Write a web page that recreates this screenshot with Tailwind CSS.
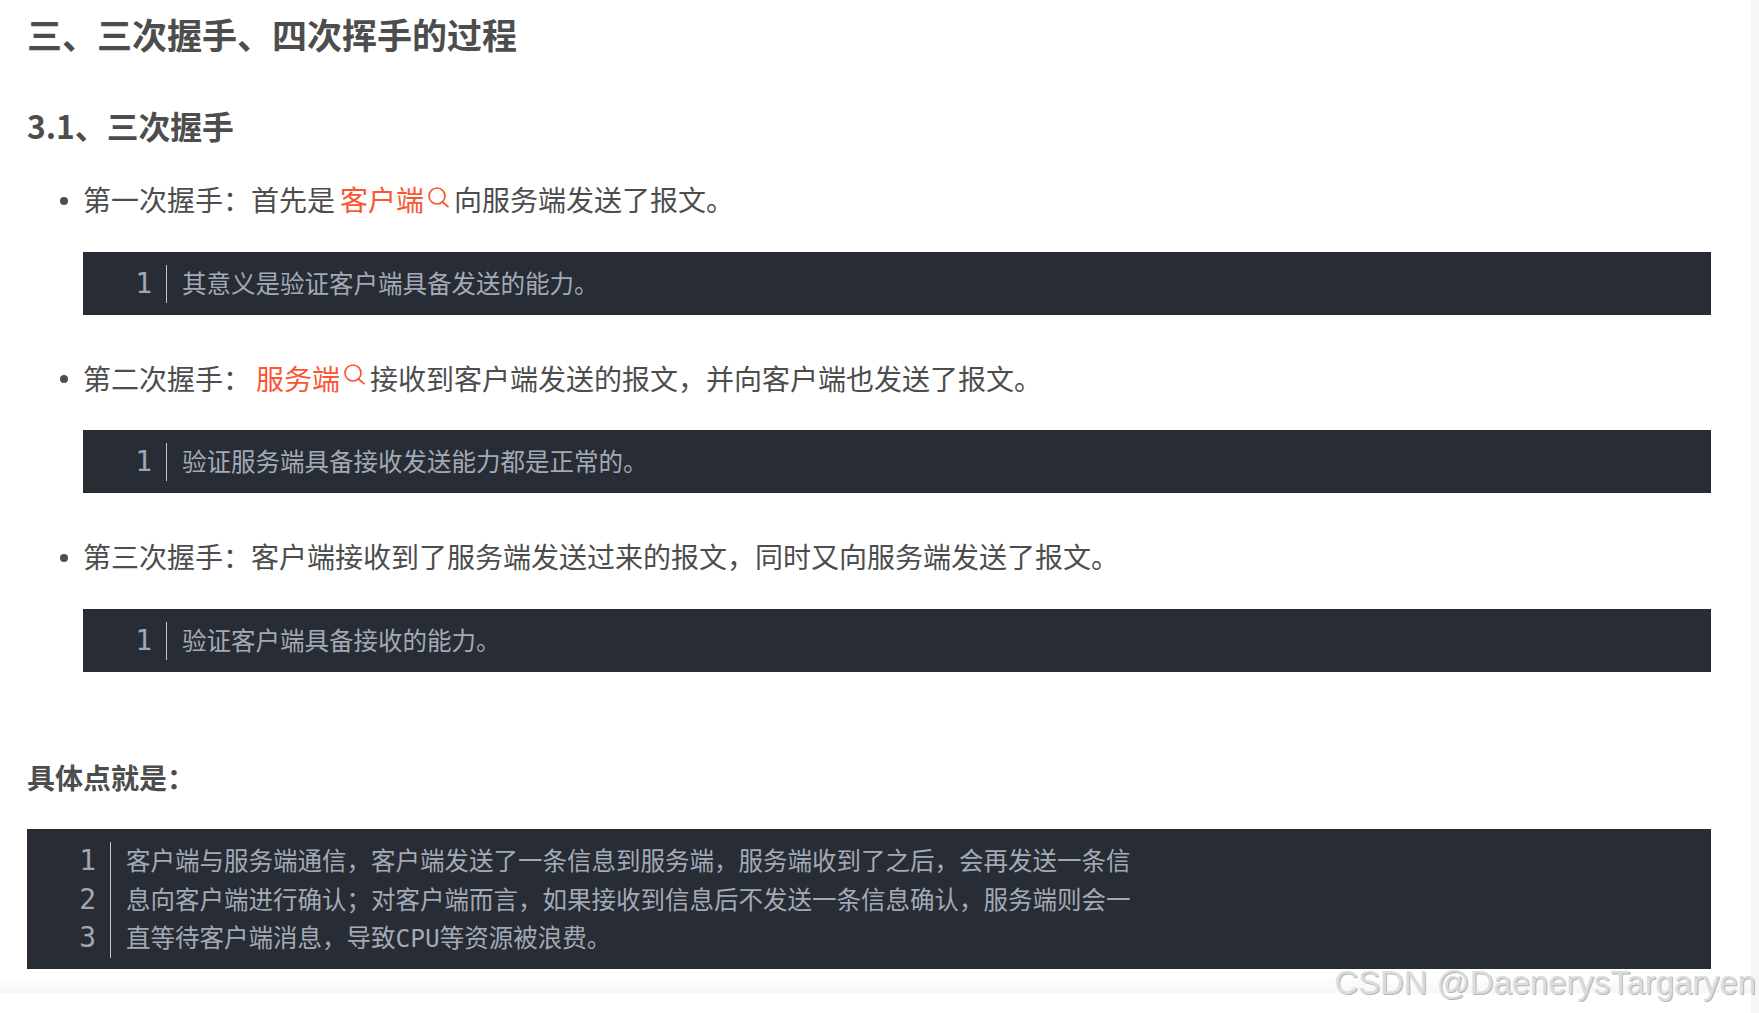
<!DOCTYPE html>
<html lang="zh">
<head>
<meta charset="utf-8">
<script src="https://cdn.jsdelivr.net/npm/@tailwindcss/browser@4"></script>
</head>
<body class="bg-white overflow-hidden">
<div class="relative w-[1759px] h-[1013px] overflow-hidden font-['Noto_Sans_CJK_SC','Noto_Sans',sans-serif] text-[#4d4d4d]">
  <main class="w-[1711px] pl-[27px] flex flex-col">
    <h1 class="mt-[6px] h-[56px] text-[35px] leading-[56px] font-bold">三、三次握手、四次挥手的过程</h1>
    <h2 class="mt-[44px] h-[38px] text-[31.8px] leading-[38px] font-bold">3.1、三次握手</h2>

    <ul class="mt-[35px] pl-[56px] flex flex-col text-[28px] leading-[44px]">
      <li class="relative">
        <span class="absolute left-[-23px] top-[18px] size-[8px] rounded-full bg-[#4d4d4d]"></span>
        <div class="h-[44px] pb-[4px] flex items-center whitespace-pre">第一次握手&#xFF1A;首先是<span class="ml-[5px] text-[#fc5531]">客户端</span><svg class="w-[30px] h-[40px] shrink-0 text-[#fc5531]" viewBox="0 0 30 40" fill="none" stroke="currentColor" stroke-width="1.7"><circle cx="13" cy="17" r="8"/><path d="M18.5 23 24.5 28"/></svg>向服务端发送了报文&#x3002;</div>
        <div class="mt-[29px] h-[63px] bg-[#282c34] flex items-center text-[24.5px] leading-[38px] text-[#a3aab7]">
          <div class="w-[84px] h-[38px] border-r border-[#c5c5c5] pr-[14px] text-right text-[#a0a7b4] font-['DejaVu_Sans_Mono',monospace] text-[28px]">1</div>
          <div class="pl-[15px] pb-[2px] font-normal">其意义是验证客户端具备发送的能力&#x3002;</div>
        </div>
      </li>
      <li class="relative mt-[42px]">
        <span class="absolute left-[-23px] top-[18px] size-[8px] rounded-full bg-[#4d4d4d]"></span>
        <div class="h-[44px] pb-[3px] flex items-center whitespace-pre">第二次握手&#xFF1A;<span class="ml-[5px] text-[#fc5531]">服务端</span><svg class="w-[30px] h-[41px] shrink-0 text-[#fc5531]" viewBox="0 0 30 41" fill="none" stroke="currentColor" stroke-width="1.7"><circle cx="13" cy="16" r="8"/><path d="M18.5 22 24.5 27"/></svg>接收到客户端发送的报文&#xFF0C;并向客户端也发送了报文&#x3002;</div>
        <div class="mt-[29px] h-[63px] bg-[#282c34] flex items-center text-[24.5px] leading-[38px] text-[#a3aab7]">
          <div class="w-[84px] h-[38px] border-r border-[#c5c5c5] pr-[14px] text-right text-[#a0a7b4] font-['DejaVu_Sans_Mono',monospace] text-[28px]">1</div>
          <div class="pl-[15px] pb-[2px] font-normal">验证服务端具备接收发送能力都是正常的&#x3002;</div>
        </div>
      </li>
      <li class="relative mt-[43px]">
        <span class="absolute left-[-23px] top-[18px] size-[8px] rounded-full bg-[#4d4d4d]"></span>
        <div class="h-[44px] pb-[4px] flex items-center whitespace-pre">第三次握手&#xFF1A;客户端接收到了服务端发送过来的报文&#xFF0C;同时又向服务端发送了报文&#x3002;</div>
        <div class="mt-[29px] h-[63px] bg-[#282c34] flex items-center text-[24.5px] leading-[38px] text-[#a3aab7]">
          <div class="w-[84px] h-[38px] border-r border-[#c5c5c5] pr-[14px] text-right text-[#a0a7b4] font-['DejaVu_Sans_Mono',monospace] text-[28px]">1</div>
          <div class="pl-[15px] pb-[2px] font-normal">验证客户端具备接收的能力&#x3002;</div>
        </div>
      </li>
    </ul>

    <p class="mt-[83px] h-[45px] text-[28px] leading-[44px] font-bold">具体点就是&#xFF1A;</p>

    <div class="mt-[29px] h-[140px] bg-[#282c34] flex items-center text-[24.5px] leading-[38.67px] text-[#a3aab7]">
      <div class="w-[84px] h-[116px] mt-[2px] border-r border-[#c5c5c5] pr-[14px] text-right text-[#a0a7b4] font-['DejaVu_Sans_Mono',monospace] text-[28px]">
        <div>1</div><div>2</div><div>3</div>
      </div>
      <div class="pl-[15px] pt-[2px] font-normal">
        <div>客户端与服务端通信&#xFF0C;客户端发送了一条信息到服务端&#xFF0C;服务端收到了之后&#xFF0C;会再发送一条信</div>
        <div>息向客户端进行确认&#xFF1B;对客户端而言&#xFF0C;如果接收到信息后不发送一条信息确认&#xFF0C;服务端则会一</div>
        <div>直等待客户端消息&#xFF0C;导致<span class="font-['DejaVu_Sans_Mono',monospace] font-normal">CPU</span>等资源被浪费&#x3002;</div>
      </div>
    </div>
  </main>

  <div class="absolute left-0 right-0 top-[975px] h-[18px] bg-gradient-to-b from-white to-[#f5f6f7]"></div>
  <div class="absolute top-0 right-0 bottom-0 w-[8px] bg-[#f6f7f8]"></div>
  <div class="absolute right-[3px] top-[963px] font-['Liberation_Sans',sans-serif] text-[32.8px] leading-[40px] text-[#dcdcdc] [text-shadow:1px_1px_0_#b5b5b5]">CSDN @DaenerysTargaryen</div>
</div>
</body>
</html>
